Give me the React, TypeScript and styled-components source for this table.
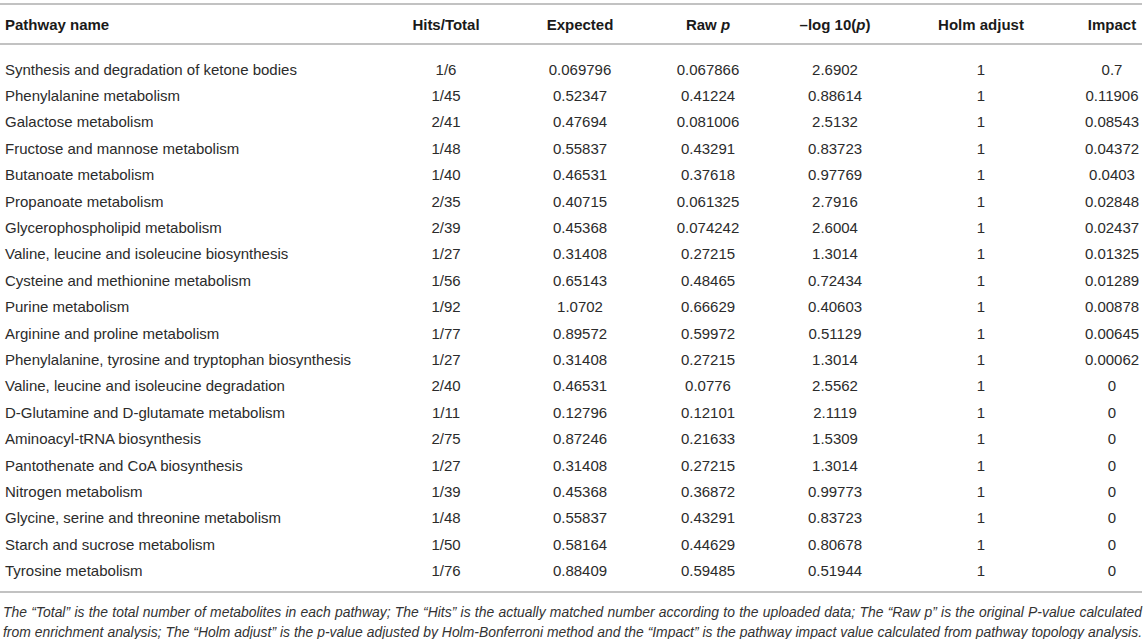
import React from "react";
import styled, { createGlobalStyle } from "styled-components";

const Global = createGlobalStyle`
  html, body { margin: 0; padding: 0; background: #fff; }
  body { font-family: "Liberation Sans", Arial, sans-serif; color: #2b2b2b; }
`;

const Wrap = styled.div`
  width: 1142px;
  padding: 3px 0 0 0;
`;

const Grid = styled.div`
  display: grid;
  grid-template-columns: 386px 120px 148px 108px 146px 146px 88px;
`;

const Head = styled(Grid)`
  border-top: 2px solid #c2c2c2;
  border-bottom: 2px solid #c2c2c2;
  height: 38px;
  align-items: center;
  font-weight: bold;
  font-size: 15px;
  color: #1a1a1a;
`;

const Body = styled.div`
  padding: 11px 0 7px 0;
  border-bottom: 2px solid #c2c2c2;
`;

const Row = styled(Grid)`
  height: 26.4px;
  align-items: center;
  font-size: 15px;
  color: #2b2b2b;
`;

const Cell = styled.div<{ $left?: boolean; $last?: boolean }>`
  text-align: ${(p) => (p.$left ? "left" : "center")};
  padding-left: ${(p) => (p.$left ? "5px" : p.$last ? "28px" : "0")};
  white-space: nowrap;
`;

const Note = styled.div`
  font-style: italic;
  font-size: 13.9px;
  line-height: 20px;
  color: #333;
  padding: 9px 0 0 3px;
`;

const NoteLine = styled.div`
  text-align: justify;
  text-align-last: justify;
`;

const rows: string[][] = [
  ["Synthesis and degradation of ketone bodies", "1/6", "0.069796", "0.067866", "2.6902", "1", "0.7"],
  ["Phenylalanine metabolism", "1/45", "0.52347", "0.41224", "0.88614", "1", "0.11906"],
  ["Galactose metabolism", "2/41", "0.47694", "0.081006", "2.5132", "1", "0.08543"],
  ["Fructose and mannose metabolism", "1/48", "0.55837", "0.43291", "0.83723", "1", "0.04372"],
  ["Butanoate metabolism", "1/40", "0.46531", "0.37618", "0.97769", "1", "0.0403"],
  ["Propanoate metabolism", "2/35", "0.40715", "0.061325", "2.7916", "1", "0.02848"],
  ["Glycerophospholipid metabolism", "2/39", "0.45368", "0.074242", "2.6004", "1", "0.02437"],
  ["Valine, leucine and isoleucine biosynthesis", "1/27", "0.31408", "0.27215", "1.3014", "1", "0.01325"],
  ["Cysteine and methionine metabolism", "1/56", "0.65143", "0.48465", "0.72434", "1", "0.01289"],
  ["Purine metabolism", "1/92", "1.0702", "0.66629", "0.40603", "1", "0.00878"],
  ["Arginine and proline metabolism", "1/77", "0.89572", "0.59972", "0.51129", "1", "0.00645"],
  ["Phenylalanine, tyrosine and tryptophan biosynthesis", "1/27", "0.31408", "0.27215", "1.3014", "1", "0.00062"],
  ["Valine, leucine and isoleucine degradation", "2/40", "0.46531", "0.0776", "2.5562", "1", "0"],
  ["D-Glutamine and D-glutamate metabolism", "1/11", "0.12796", "0.12101", "2.1119", "1", "0"],
  ["Aminoacyl-tRNA biosynthesis", "2/75", "0.87246", "0.21633", "1.5309", "1", "0"],
  ["Pantothenate and CoA biosynthesis", "1/27", "0.31408", "0.27215", "1.3014", "1", "0"],
  ["Nitrogen metabolism", "1/39", "0.45368", "0.36872", "0.99773", "1", "0"],
  ["Glycine, serine and threonine metabolism", "1/48", "0.55837", "0.43291", "0.83723", "1", "0"],
  ["Starch and sucrose metabolism", "1/50", "0.58164", "0.44629", "0.80678", "1", "0"],
  ["Tyrosine metabolism", "1/76", "0.88409", "0.59485", "0.51944", "1", "0"],
];

export default function App() {
  return (
    <>
      <Global />
      <Wrap>
        <Head>
          <Cell $left>Pathway name</Cell>
          <Cell>Hits/Total</Cell>
          <Cell>Expected</Cell>
          <Cell>
            Raw <i>p</i>
          </Cell>
          <Cell>
            –log 10(<i>p</i>)
          </Cell>
          <Cell>Holm adjust</Cell>
          <Cell $last>Impact</Cell>
        </Head>
        <Body>
          {rows.map((r) => (
            <Row key={r[0]}>
              {r.map((v, i) => (
                <Cell key={i} $left={i === 0} $last={i === 6}>
                  {v}
                </Cell>
              ))}
            </Row>
          ))}
        </Body>
        <Note>
          <NoteLine>
            The “Total” is the total number of metabolites in each pathway; The “Hits” is the actually matched number according to the uploaded data; The “Raw p” is the original P-value calculated
          </NoteLine>
          <NoteLine>
            from enrichment analysis; The “Holm adjust” is the p-value adjusted by Holm-Bonferroni method and the “Impact” is the pathway impact value calculated from pathway topology analysis.
          </NoteLine>
        </Note>
      </Wrap>
    </>
  );
}
